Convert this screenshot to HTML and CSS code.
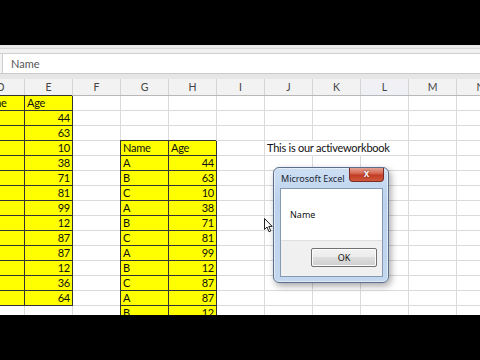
FILE: index.html
```html
<!DOCTYPE html>
<html>
<head>
<meta charset="utf-8">
<link rel="stylesheet" href="styles.css">
</head>
<body>
<div class="screen">
  <div class="letterbox"></div>
  <div class="app">
    <div class="strip1"></div>
    <div class="formula"><div class="fx-field">Name</div></div>
    <div class="strip2"></div>
    <div class="colhead"><span>D</span><span>E</span><span>F</span><span>G</span><span>H</span><span>I</span><span>J</span><span>K</span><span class="sel">L</span><span>M</span><span>N</span></div>
    <div class="row"><span class="y">Name</span><span class="y">Age</span><span></span><span></span><span></span><span></span><span></span><span></span><span></span><span></span><span></span></div>
    <div class="row"><span class="y"></span><span class="y n">44</span><span></span><span></span><span></span><span></span><span></span><span></span><span></span><span></span><span></span></div>
    <div class="row"><span class="y"></span><span class="y n">63</span><span></span><span></span><span></span><span></span><span></span><span></span><span></span><span></span><span></span></div>
    <div class="row"><span class="y"></span><span class="y n">10</span><span></span><span class="y">Name</span><span class="y">Age</span><span></span><span class="nb">This is our activeworkbook</span><span class="nb"></span><span></span><span></span><span></span></div>
    <div class="row"><span class="y"></span><span class="y n">38</span><span></span><span class="y">A</span><span class="y n">44</span><span></span><span></span><span></span><span></span><span></span><span></span></div>
    <div class="row"><span class="y"></span><span class="y n">71</span><span></span><span class="y">B</span><span class="y n">63</span><span></span><span></span><span></span><span></span><span></span><span></span></div>
    <div class="row"><span class="y"></span><span class="y n">81</span><span></span><span class="y">C</span><span class="y n">10</span><span></span><span></span><span></span><span></span><span></span><span></span></div>
    <div class="row"><span class="y"></span><span class="y n">99</span><span></span><span class="y">A</span><span class="y n">38</span><span></span><span></span><span></span><span></span><span></span><span></span></div>
    <div class="row"><span class="y"></span><span class="y n">12</span><span></span><span class="y">B</span><span class="y n">71</span><span></span><span></span><span></span><span></span><span></span><span></span></div>
    <div class="row"><span class="y"></span><span class="y n">87</span><span></span><span class="y">C</span><span class="y n">81</span><span></span><span></span><span></span><span></span><span></span><span></span></div>
    <div class="row"><span class="y"></span><span class="y n">87</span><span></span><span class="y">A</span><span class="y n">99</span><span></span><span></span><span></span><span></span><span></span><span></span></div>
    <div class="row"><span class="y"></span><span class="y n">12</span><span></span><span class="y">B</span><span class="y n">12</span><span></span><span></span><span></span><span></span><span></span><span></span></div>
    <div class="row"><span class="y"></span><span class="y n">36</span><span></span><span class="y">C</span><span class="y n">87</span><span></span><span></span><span></span><span></span><span></span><span></span></div>
    <div class="row"><span class="y"></span><span class="y n">64</span><span></span><span class="y">A</span><span class="y n">87</span><span></span><span></span><span></span><span></span><span></span><span></span></div>
    <div class="row"><span></span><span></span><span></span><span class="y">B</span><span class="y n">12</span><span></span><span></span><span></span><span></span><span></span><span></span></div>
  </div>
  <div class="letterbox"></div>

  <div class="dialog">
    <div class="dlg-title">Microsoft Excel</div>
    <div class="dlg-close">x</div>
    <div class="dlg-client">
      <div class="dlg-msg">Name</div>
      <div class="dlg-foot"><div class="dlg-btn">OK</div></div>
    </div>
  </div>

  <svg class="cursor" width="10" height="15" viewBox="0 0 10 15">
    <path d="M0.5 0.5 L0.5 11.5 L3 9 L5 13.8 L6.8 13 L4.8 8.4 L8.2 8.4 Z" fill="#fff" stroke="#222" stroke-width="1" stroke-linejoin="round"/>
  </svg>
</div>
</body>
</html>
```
FILE: styles.css
```css
* { box-sizing: border-box; margin: 0; padding: 0; }
html, body { background: #000; }
body { width: 480px; height: 360px; overflow: hidden; }

.screen {
  position: relative;
  width: 480px;
  height: 360px;
  background: #000;
  display: flex;
  flex-direction: column;
  overflow: hidden;
}
.letterbox { height: 45px; flex: none; background: #000; }

.app {
  height: 270px;
  flex: none;
  overflow: hidden;
  background: #fff;
  display: flex;
  flex-direction: column;
}

.strip1 {
  height: 9px;
  flex: none;
  background: linear-gradient(#e9e9e9 0, #e9e9e9 3px, #d6d6d6 3px, #d6d6d6 4px, #f1f1f1 4px);
  border-bottom: 1px solid #cfcfcf;
}
.formula {
  height: 19px;
  flex: none;
  background: #f3f3f3;
  padding-left: 2px;
  display: flex;
}
.fx-field {
  flex: 1;
  background: #fff;
  border-left: 1px solid #cdcdcd;
  padding-left: 8px;
  font: 11px/19px "Lato", "Liberation Sans", sans-serif;
  color: #555;
}
.strip2 {
  height: 6px;
  flex: none;
  background: #e6e6e6;
  border-top: 1px solid #cacaca;
}

.colhead {
  height: 17px;
  flex: none;
  display: grid;
  grid-template-columns: repeat(11, 48px);
  width: 528px;
  margin-left: -23px;
  background: #f2f2f2;
  border-bottom: 1px solid #b8b8b8;
}
.colhead span {
  border-right: 1px solid #d4d4d4;
  text-align: center;
  font: 10.5px/16px "Lato", "Liberation Sans", sans-serif;
  color: #444;
}
.colhead .sel { background: linear-gradient(#f2f0f4, #eef0f5); }

.row {
  height: 15px;
  flex: none;
  display: grid;
  grid-template-columns: repeat(11, 48px);
  width: 528px;
  margin-left: -23px;
}
.row span {
  display: block;
  border-right: 1px solid #dadada;
  border-bottom: 1px solid #dadada;
  padding: 0 2px;
  font: 11px/14px "Lato", "Liberation Sans", sans-serif;
  letter-spacing: -0.25px;
  color: #111;
  white-space: nowrap;
}
.row .n { text-align: right; }
.row .y {
  background: #ffff00;
  border-right-color: #333;
  border-bottom-color: #333;
  box-shadow: -1px -1px 0 #333;
}
.row .nb { border-right-color: transparent; }

.dialog {
  position: absolute;
  left: 273px;
  top: 167px;
  width: 116px;
  height: 116px;
  border: 1px solid #5b6f8c;
  border-radius: 6px;
  background: linear-gradient(#cddff3, #bcd2ec 30%, #c3d7ee);
  box-shadow: 2px 3px 7px rgba(0, 0, 0, 0.35), inset 0 0 0 1px rgba(255, 255, 255, 0.5);
  padding: 0 5px 5px 6px;
  display: flex;
  flex-direction: column;
}
.dlg-title {
  height: 20px;
  flex: none;
  padding-left: 1px;
  font: 9px/21px "Noto Sans", "Liberation Sans", sans-serif;
  color: #1b2533;
}
.dlg-close {
  position: absolute;
  left: 75px;
  top: 0;
  width: 35px;
  height: 14px;
  border: 1px solid #7c2c22;
  border-top: none;
  border-radius: 0 0 4px 4px;
  background: linear-gradient(#e3a394 0%, #d76a55 40%, #c23c24 55%, #cf5a3d 100%);
  color: #fff;
  text-align: center;
  font: bold 10px/11px "Liberation Sans", sans-serif;
  text-shadow: 0 0 2px #5a1208;
}
.dlg-client {
  flex: 1;
  border: 1px solid #8598b4;
  background: #fff;
  display: flex;
  flex-direction: column;
}
.dlg-msg {
  height: 51px;
  flex: none;
  padding: 20px 0 0 9px;
  font: 9px/12px "Noto Sans", "Liberation Sans", sans-serif;
  color: #111;
}
.dlg-foot {
  flex: 1;
  background: #f0f0f0;
  border-top: 1px solid #dfdfdf;
  display: flex;
  justify-content: flex-end;
  align-items: flex-start;
  padding: 7px 5px 0 0;
}
.dlg-btn {
  width: 66px;
  height: 19px;
  border: 1px solid #707070;
  border-radius: 2px;
  background: linear-gradient(#f2f2f2, #ebebeb 50%, #dddddd 50%, #cfcfcf);
  box-shadow: inset 0 0 0 1px #fcfcfc;
  text-align: center;
  font: 9px/17px "Noto Sans", "Liberation Sans", sans-serif;
  color: #111;
}

.cursor {
  position: absolute;
  left: 264px;
  top: 218px;
}
```
